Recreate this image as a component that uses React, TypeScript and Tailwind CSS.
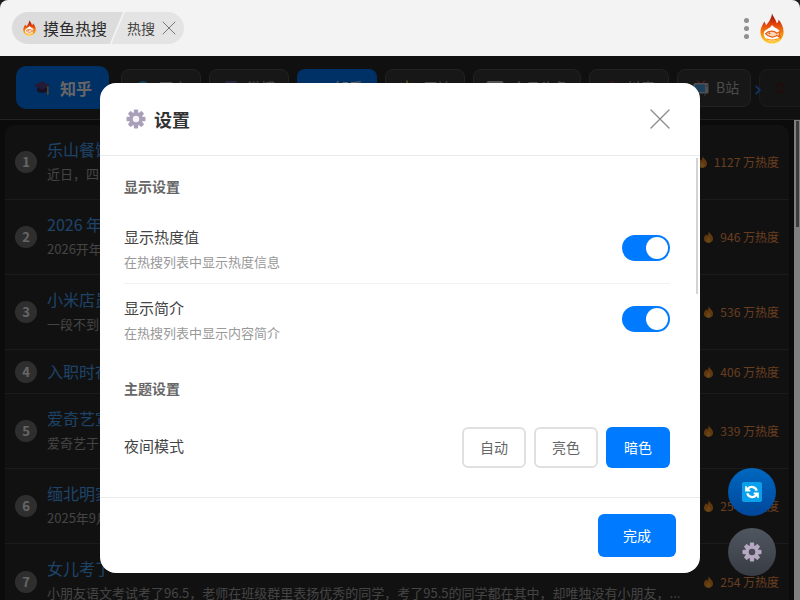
import React from "react";
import { X, ChevronRight } from "lucide-react";

const font = { fontFamily: '"Noto Sans CJK SC", "Liberation Sans", sans-serif' };

function Flame({ className = "" }: { className?: string }) {
  return (
    <svg viewBox="0 0 12 14" className={className}>
      <path d="M6.2 0.5C6.7 3 11 5 11 9C11 11.8 8.8 13.5 6 13.5C3.2 13.5 1 11.8 1 9C1 6.8 2.6 5.6 3.2 4C4 4.6 4.3 5.2 4.5 5.8C5.6 4.5 6.4 2.6 6.2 0.5Z" fill="#f08a24" />
      <path d="M6 6.5C6.4 8.2 8.4 9.2 8.4 10.9C8.4 12.3 7.2 13.2 6 13.2C4.8 13.2 3.6 12.3 3.6 10.9C3.6 9.3 5.6 8.4 6 6.5Z" fill="#ffb53c" />
    </svg>
  );
}

function Logo({ w, h, id }: { w: number; h: number; id: string }) {
  return (
    <svg viewBox="0 0 28 36" width={w} height={h} preserveAspectRatio="none">
      <defs>
        <linearGradient id={id} x1="0" y1="0" x2="0" y2="1">
          <stop offset="0" stopColor="#8a1006" />
          <stop offset="0.35" stopColor="#e2400a" />
          <stop offset="0.7" stopColor="#f6930f" />
          <stop offset="1" stopColor="#ffd437" />
        </linearGradient>
      </defs>
      <path d="M14 0.5C15.5 5 18.5 6.5 19.5 12C21 11 21.6 9.5 21.6 7.5C25 12 27.5 16 27.5 22C27.5 30 21.5 35.5 14 35.5C6.5 35.5 0.5 30 0.5 22C0.5 17 3 14 5 10C6 11.5 6.8 13 7 14.5C10 11 13.5 6 14 0.5Z" fill={`url(#${id})`} />
      <path d="M14 13.5C15 16.5 20 17 23 21C24.8 24.5 22.5 32 14 32.8C5.5 32 3.2 25 5 21.5C8 18 12.5 17.5 14 13.5Z" fill="#fff" />
      <path d="M6.5 24C10 20 16.5 20 19.5 23.5L23.5 21.5L22.4 25L23.5 28L19.5 26C16.5 29 10 28.5 6.5 24Z" fill="#fbd9b8" stroke="#e8601a" strokeWidth="1.5" />
      <circle cx="11" cy="23.6" r="1.1" fill="#d9480f" />
      <path d="M7.5 30C11 31.6 17 31.6 20.5 30" fill="none" stroke="#f6930f" strokeWidth="1.2" />
    </svg>
  );
}

function Gear({ size, color, hole }: { size: number; color: string; hole: string }) {
  const teeth = [0, 45, 90, 135, 180, 225, 270, 315];
  return (
    <svg viewBox="0 0 24 24" width={size} height={size}>
      {teeth.map((a) => (
        <rect key={a} x="9.4" y="0.6" width="5.2" height="6" rx="1.2" fill={color} transform={`rotate(${a} 12 12)`} />
      ))}
      <circle cx="12" cy="12" r="8.2" fill={color} />
      <circle cx="12" cy="12" r="3.9" fill={hole} />
    </svg>
  );
}

function Hat({ w }: { w: number }) {
  return (
    <svg viewBox="0 0 20 17" width={w} height={(w * 17) / 20}>
      <path d="M4.5 8V12.5C7.5 15 12.5 15 15.5 12.5V8Z" fill="#3a2a60" />
      <path d="M0.5 6L10 1.5L19.5 6L10 10.5Z" fill="#5a4488" />
      <path d="M16.5 7V13.5" stroke="#f0b840" strokeWidth="1.4" />
      <path d="M15.7 13H17.3V16.5H15.7Z" fill="#f0b840" />
    </svg>
  );
}

function TabIcon({ kind }: { kind: string }) {
  if (kind === "baidu") {
    return (
      <svg viewBox="0 0 16 16" width="16" height="16">
        <circle cx="8" cy="8" r="7" fill="#3a9be0" />
      </svg>
    );
  }
  if (kind === "weibo") {
    return (
      <svg viewBox="0 0 16 16" width="16" height="16">
        <rect x="2" y="1" width="12" height="14" rx="2" fill="#6b5a9c" />
        <path d="M4 4H12" stroke="#b9b0d8" strokeWidth="1.4" />
      </svg>
    );
  }
  if (kind === "sun") {
    return (
      <svg viewBox="0 0 16 16" width="16" height="16" stroke="#f0cc40" strokeWidth="1.6">
        <circle cx="8" cy="9" r="3.6" fill="#f0cc40" />
        <path d="M8 0.5V3M2 3L3.8 4.8M14 3L12.2 4.8M0.5 9H3M13 9H15.5" />
      </svg>
    );
  }
  if (kind === "news") {
    return (
      <svg viewBox="0 0 18 16" width="18" height="16">
        <rect x="0.5" y="1" width="17" height="14" rx="2" fill="#cfcfcf" />
      </svg>
    );
  }
  if (kind === "douyin") {
    return (
      <svg viewBox="0 0 16 16" width="16" height="16">
        <path d="M7 1H10C10.3 3 11.5 4.2 14 4.5V7.5C12.4 7.4 11.1 7 10 6.2V11C10 13.5 8 15 6 15C3.8 15 2 13.4 2 11C2 8.8 3.8 7 6.5 7.2V10C5.5 9.8 4.8 10.3 4.8 11.1C4.8 11.8 5.4 12.3 6 12.3C6.8 12.3 7 11.7 7 11Z" fill="#a02a38" />
      </svg>
    );
  }
  return <Hat w={16} />;
}

function Tv() {
  return (
    <svg viewBox="0 0 16 16" width="16" height="16">
      <path d="M4 0.5L7 3.5M12 0.5L9 3.5" stroke="#b04a5a" strokeWidth="1.2" />
      <rect x="0.5" y="3" width="15" height="10.5" rx="1.5" fill="#c4c8cc" />
      <rect x="2" y="4.6" width="10" height="7.4" rx="0.5" fill="#4da0e0" />
      <circle cx="13.8" cy="6" r="0.8" fill="#c8445a" />
      <path d="M4 14V15.8M12 14V15.8" stroke="#8a8a8a" strokeWidth="1.2" />
    </svg>
  );
}

function Toggle() {
  return (
    <div className="flex h-[26px] w-12 items-center justify-end rounded-full bg-[#007aff] pr-[2px]">
      <div className="h-[22px] w-[22px] rounded-full bg-white" />
    </div>
  );
}

const tabs = [
  { label: "百度", w: "w-[80px]", kind: "baidu", active: false },
  { label: "微博", w: "w-[80px]", kind: "weibo", active: false },
  { label: "知乎", w: "w-[80px]", kind: "hat", active: true },
  { label: "原神", w: "w-[80px]", kind: "sun", active: false },
  { label: "今日头条", w: "w-[108px]", kind: "news", active: false },
  { label: "抖音", w: "w-[80px]", kind: "douyin", active: false },
];

const rows = [
  { n: 1, t: "乐山餐馆", d: "近日，四", h: "1127 万热度" },
  { n: 2, t: "2026 年", d: "2026开年", h: "946 万热度" },
  { n: 3, t: "小米店员", d: "一段不到", h: "536 万热度" },
  { n: 4, t: "入职时在", d: "", h: "406 万热度" },
  { n: 5, t: "爱奇艺宣", d: "爱奇艺于", h: "339 万热度" },
  { n: 6, t: "缅北明家", d: "2025年9月", h: "254 万热度" },
];

function Row({ n, t, d, h, last }: { n: number; t: string; d: string; h: string; last?: boolean }) {
  return (
    <div className={`flex items-center gap-[10px] px-[10px] ${d ? "h-[75px]" : "h-[44px]"} ${last ? "" : "border-b border-[#444]"}`}>
      <div className="flex h-[22px] w-[22px] shrink-0 items-center justify-center rounded-full bg-[#747474] text-[13px] font-bold text-white">{n}</div>
      <div className="flex min-w-0 flex-1 flex-col gap-[1px] pb-[2px]">
        <div className="truncate text-[16px] leading-[24px] text-[#4aa8ff]">{t}</div>
        {d && <div className="truncate text-[13px] leading-[24px] text-[#aaa]">{d}</div>}
      </div>
      <div className="flex shrink-0 items-center gap-[6px] text-[12px] text-[#ff9a50]">
        <Flame className="h-[14px] w-[11px]" />
        <span>{h}</span>
      </div>
    </div>
  );
}

export default function App() {
  return (
    <div style={font} className="relative h-[600px] w-[800px] overflow-hidden bg-[#1c1c1c]">
      <header className="flex h-14 items-center justify-between rounded-t-[8px] bg-[#f3f3f3] pl-3 pr-4">
        <div className="flex h-8 items-stretch overflow-hidden rounded-full bg-[#e4e4e4]">
          <div className="w-[113px] bg-[#f3f3f3] [clip-path:polygon(0_0,100%_0,88%_100%,0_100%)]">
            <div className="flex h-full w-[111px] items-center gap-[7px] bg-[#dcdcdc] pl-[11px] [clip-path:polygon(0_0,100%_0,88%_100%,0_100%)]">
              <Logo w={13} h={16} id="logo-small" />
              <span className="text-[16px] text-[#2a2a2a]">摸鱼热搜</span>
            </div>
          </div>
          <div className="-ml-[1px] flex items-center gap-[2px] pl-[3px] pr-[3px]">
            <span className="text-[14px] text-[#444]">热搜</span>
            <X size={24} strokeWidth={1} className="text-[#777]" />
          </div>
        </div>
        <div className="flex items-center gap-[11px]">
          <div className="flex flex-col gap-[3px]">
            <span className="h-[5px] w-[5px] rounded-full bg-[#8f8f8f]" />
            <span className="h-[5px] w-[5px] rounded-full bg-[#8f8f8f]" />
            <span className="h-[5px] w-[5px] rounded-full bg-[#8f8f8f]" />
          </div>
          <Logo w={24} h={31} id="logo-large" />
        </div>
      </header>

      <nav className="relative flex h-[64px] items-center gap-2 overflow-hidden border-b border-[#555] bg-[#282828] pl-4">
        <div className="mr-1 flex h-[43px] w-[93px] shrink-0 items-center justify-center gap-[9px] rounded-[10px] bg-[#007aff] text-[16px] font-bold text-white">
          <Hat w={18} />
          知乎
        </div>
        {tabs.map((t) => (
          <div key={t.kind} className={`flex h-[38px] shrink-0 items-center justify-center gap-2 rounded-[8px] text-[14px] ${t.w} ${t.active ? "bg-[#007aff] text-white" : "border border-[#555] bg-[#3a3a3a] text-[#bbb]"}`}>
            <TabIcon kind={t.kind} />
            {t.label}
          </div>
        ))}
        <div className="flex h-[38px] w-[74px] shrink-0 items-center justify-start gap-[7px] rounded-[8px] border border-[#555] bg-[#3a3a3a] pl-[15px] text-[14px] text-[#bbb]">
          <Tv />
          B站
        </div>
        <div className="flex h-[38px] w-[60px] shrink-0 items-center rounded-[8px] border border-[#444] bg-[#333] pl-[17px]">
          <span className="h-[12px] w-[7px] rounded-full border-2 border-[#4a2222]" />
        </div>
        <ChevronRight size={14} strokeWidth={3.5} className="absolute left-[751px] top-[27px] text-[#2a80e0]" />
      </nav>

      <main className="flex">
        <div className="m-[5px] mr-0 w-[784px] overflow-hidden rounded-[10px] bg-[#2c2c2c]">
          {rows.map((r) => (
            <Row key={r.n} {...r} />
          ))}
          <Row n={7} t="女儿考了" d="小朋友语文考试考了96.5，老师在班级群里表扬优秀的同学，考了95.5的同学都在其中，却唯独没有小朋友，..." h="254 万热度" last />
        </div>
      </main>

      <div className="absolute inset-x-0 bottom-0 top-14 bg-black/60" />
      <div className="absolute bottom-0 right-0 top-[120px] w-[6px] bg-[#808080] px-[2px] pt-[1px]">
        <div className="h-[106px] w-[3px] bg-[#3c3c3c]" />
      </div>

      <div className="absolute left-[100px] top-[83px] flex h-[490px] w-[600px] flex-col overflow-hidden rounded-[16px] bg-white">
        <div className="flex h-[73px] shrink-0 items-center justify-between border-b border-[#eaeaea] pl-[26px] pr-[22px]">
          <div className="flex items-center gap-[8px]">
            <Gear size={20} color="#a99fb8" hole="#f4f2f6" />
            <span className="text-[18px] font-bold text-[#333]">设置</span>
          </div>
          <X size={36} strokeWidth={0.9} className="text-[#8e8e8e]" />
        </div>
        <div className="relative flex-1 overflow-hidden pl-[24px] pr-[30px]">
          <div className="absolute right-[2px] top-[2px] h-[136px] w-[2px] bg-[#d4d4d4]" />
          <div className="pt-[20px] text-[14px] font-bold leading-[20px] text-[#666]">显示设置</div>
          <div className="mt-[17px] flex h-[71px] items-center justify-between border-b border-[#f2f2f2]">
            <div>
              <div className="text-[15px] leading-[22px] text-[#444]">显示热度值</div>
              <div className="mt-[5px] text-[13px] leading-[18px] text-[#999]">在热搜列表中显示热度信息</div>
            </div>
            <Toggle />
          </div>
          <div className="flex h-[70px] items-center justify-between">
            <div>
              <div className="text-[15px] leading-[22px] text-[#444]">显示简介</div>
              <div className="mt-[5px] text-[13px] leading-[18px] text-[#999]">在热搜列表中显示内容简介</div>
            </div>
            <Toggle />
          </div>
          <div className="mt-[24px] text-[14px] font-bold leading-[20px] text-[#666]">主题设置</div>
          <div className="mt-[29px] flex h-[41px] items-center justify-between">
            <span className="pb-[3px] text-[15px] text-[#444]">夜间模式</span>
            <div className="flex gap-2">
              <div className="flex h-[41px] w-[64px] items-center justify-center rounded-[6px] border-2 border-[#e0e0e0] text-[14px] text-[#666]">自动</div>
              <div className="flex h-[41px] w-[64px] items-center justify-center rounded-[6px] border-2 border-[#e0e0e0] text-[14px] text-[#666]">亮色</div>
              <div className="flex h-[41px] w-[64px] items-center justify-center rounded-[6px] bg-[#007aff] text-[14px] text-white">暗色</div>
            </div>
          </div>
        </div>
        <div className="flex h-[76px] shrink-0 items-center justify-end border-t border-[#eaeaea] pr-[24px]">
          <div className="flex h-[43px] w-[78px] items-center justify-center rounded-[6px] bg-[#007aff] text-[14px] text-white">完成</div>
        </div>
      </div>

      <div className="absolute left-[728px] top-[468px] flex h-12 w-12 items-center justify-center rounded-full bg-gradient-to-b from-[#0068c0] to-[#00479a]">
        <div className="flex h-[20px] w-[20px] items-center justify-center rounded-[2px] bg-[#0aa0ec]">
          <svg viewBox="0 0 24 24" width="16" height="16" fill="none" stroke="#fff" strokeWidth="3.4">
            <path d="M19 10A7.5 7.5 0 0 0 6 7L4 9" />
            <path d="M3 3.5V10H9.5" strokeWidth="2.4" fill="#fff" />
            <path d="M5 14A7.5 7.5 0 0 0 18 17L20 15" />
            <path d="M21 20.5V14H14.5" strokeWidth="2.4" fill="#fff" />
          </svg>
        </div>
      </div>
      <div className="absolute left-[728px] top-[528px] flex h-12 w-12 items-center justify-center rounded-full bg-gradient-to-b from-[#505660] to-[#383c44]">
        <Gear size={20} color="#b5a9c2" hole="#4a4d56" />
      </div>
    </div>
  );
}
